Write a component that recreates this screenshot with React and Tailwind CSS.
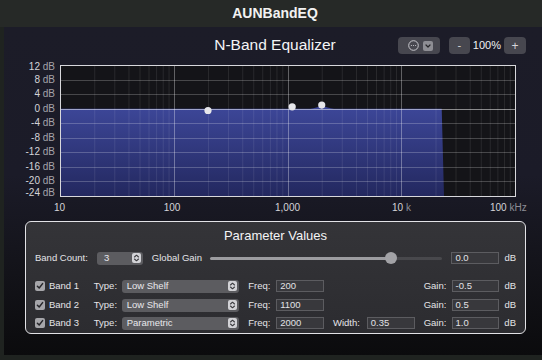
import React from "react";

function Chart() {
  const W = 455;
  const H = 131;
  const xf = (f) => (W / 4) * (Math.log10(f) - 1);
  const yd = (d) => ((12 - d) * H) / 36;
  const minors = [];
  for (let dec = 10; dec < 100000; dec *= 10)
    for (let k = 2; k <= 9; k++) minors.push(xf(dec * k));
  const majors = [100, 1000, 10000].map(xf);
  const hs = [8, 4, -4, -8, -12, -16, -20].map(yd);
  const z = yd(0);
  return (
    <svg width="456" height="132" viewBox="0 0 456 132" className="block">
      <defs>
        <linearGradient id="fillg" x1="0" y1="0" x2="0" y2="1">
          <stop offset="0" stopColor="#3d4799" />
          <stop offset="1" stopColor="#23285f" />
        </linearGradient>
      </defs>
      <rect x="0" y="0" width="456" height="132" fill="#141418" />
      <path
        d={`M0.5,${z} H250 C255,${z} 258,41.2 262,41.2 C266,41.2 269,${z} 274,${z} H381.7 L384,131 H0.5 Z`}
        fill="url(#fillg)"
      />
      {minors.map((x, i) => (
        <line key={"m" + i} x1={x + 0.5} x2={x + 0.5} y1="0" y2="131" stroke="rgba(255,255,255,0.09)" strokeWidth="1" />
      ))}
      {majors.map((x, i) => (
        <line key={"M" + i} x1={Math.round(x) + 0.5} x2={Math.round(x) + 0.5} y1="0" y2="131" stroke="rgba(255,255,255,0.33)" strokeWidth="1" />
      ))}
      {hs.map((y, i) => (
        <line key={"h" + i} x1="0" x2="456" y1={Math.round(y) + 0.5} y2={Math.round(y) + 0.5} stroke="rgba(255,255,255,0.22)" strokeWidth="1" />
      ))}
      <line x1="0" x2="456" y1={Math.round(z) + 0.5} y2={Math.round(z) + 0.5} stroke="rgba(255,255,255,0.5)" strokeWidth="1" />
      <rect x="0.5" y="0.5" width="455" height="131" fill="none" stroke="#d8d8dc" strokeWidth="1" />
      <circle cx={xf(200)} cy={yd(-0.5)} r="3.6" fill="#e6e6ea" />
      <circle cx={xf(1100)} cy={yd(0.5)} r="3.6" fill="#e6e6ea" />
      <circle cx={xf(2000)} cy={yd(1)} r="3.6" fill="#e6e6ea" />
    </svg>
  );
}

function UpDown() {
  return (
    <span className="w-[9px] h-[10px] rounded-[2px] bg-[#d2d2d6] flex items-center justify-center">
      <svg width="7" height="8" viewBox="0 0 7 8">
        <path d="M1.5 3 L3.5 1.2 L5.5 3" fill="none" stroke="#3a3a3e" strokeWidth="1.1" strokeLinecap="round" strokeLinejoin="round" />
        <path d="M1.5 5 L3.5 6.8 L5.5 5" fill="none" stroke="#3a3a3e" strokeWidth="1.1" strokeLinecap="round" strokeLinejoin="round" />
      </svg>
    </span>
  );
}

function Select({ value, w }) {
  return (
    <div className={`${w} h-[13px] rounded-[3px] bg-[#5c5c60] flex items-center justify-between pl-[5px] pr-[2px] text-[#e8e8ec]`}>
      <span className="leading-none">{value}</span>
      <UpDown />
    </div>
  );
}

function Field({ value }) {
  return (
    <div className="w-[48px] h-[12px] bg-[#38383c] border border-[#5c5c60] flex items-center pl-[3px] text-[#e2e2e6] leading-none">
      {value}
    </div>
  );
}

function Check() {
  return (
    <span className="w-[10px] h-[10px] rounded-[2px] bg-[#a6a6aa] flex items-center justify-center">
      <svg width="8" height="8" viewBox="0 0 8 8">
        <path d="M1.4 4.2 L3.2 6 L6.6 1.6" fill="none" stroke="#26262a" strokeWidth="1.5" strokeLinecap="round" strokeLinejoin="round" />
      </svg>
    </span>
  );
}

function BandRow({ n, type, freq, width, gain, mt }) {
  return (
    <div className={`${mt} h-[14px] flex items-center`}>
      <Check />
      <span className="ml-[4px] w-[45px]">Band {n}</span>
      <span className="w-[28px]">Type:</span>
      <Select value={type} w="w-[118px]" />
      <span className="ml-[9px] w-[28px]">Freq:</span>
      <Field value={freq} />
      {width ? (
        <>
          <span className="ml-[9px] w-[34px]">Width:</span>
          <Field value={width} />
        </>
      ) : (
        <span className="ml-[9px] w-[82px]" />
      )}
      <span className="ml-[9px] w-[28px]">Gain:</span>
      <Field value={gain} />
      <span className="ml-[5px]">dB</span>
    </div>
  );
}

export default function App() {
  const yLabels = [
    ["12", 66.5],
    ["8", 79.5],
    ["4", 94],
    ["0", 108.5],
    ["-4", 123],
    ["-8", 137.5],
    ["-12", 152],
    ["-16", 166.5],
    ["-20", 181],
    ["-24", 193],
  ];
  const xLabels = [
    ["10", "", 59.5],
    ["100", "", 172],
    ["1,000", "", 287.5],
    ["10", "k", 401.5],
  ];
  return (
    <div className="w-[542px] h-[360px] bg-[#1f2320] flex flex-col overflow-hidden font-['Liberation_Sans',Arial,sans-serif]">
      <div className="h-[27px] shrink-0 bg-[#262927] flex items-center justify-center pl-[8px] text-[14px] font-bold text-[#f2f2f2]">
        AUNBandEQ
      </div>
      <div className="flex-1 pl-[4px] pb-[5px] flex">
        <div className="flex-1 flex flex-col bg-[linear-gradient(180deg,#1c1c28_0%,#1b1b28_45%,#131319_75%,#0b0b0d_100%)]">
          {/* header */}
          <div className="h-[36px] grid grid-cols-[1fr_auto_1fr] items-center pl-[4px]">
            <div />
            <div className="text-[15.5px] text-[#f4f4f6] leading-none">N-Band Equalizer</div>
            <div className="flex items-center justify-end pr-[16px] pt-[1px]">
              <div className="w-[42px] h-[17px] rounded-[4px] bg-[#47474f] flex items-center pl-[10px] gap-[4px]">
                <svg width="11" height="11" viewBox="0 0 11 11">
                  <circle cx="5.5" cy="5.5" r="4.8" fill="none" stroke="#c8c8ce" strokeWidth="1" />
                  <circle cx="3.4" cy="5.5" r="0.6" fill="#c8c8ce" />
                  <circle cx="5.5" cy="5.5" r="0.6" fill="#c8c8ce" />
                  <circle cx="7.6" cy="5.5" r="0.6" fill="#c8c8ce" />
                </svg>
                <span className="w-[10px] h-[10px] rounded-[2px] bg-[#8e8e94] flex items-center justify-center">
                  <svg width="6" height="4" viewBox="0 0 6 4">
                    <path d="M1 1 L3 3 L5 1" fill="none" stroke="#26262a" strokeWidth="1.2" strokeLinecap="round" strokeLinejoin="round" />
                  </svg>
                </span>
              </div>
              <div className="ml-[9px] w-[21px] h-[17px] rounded-[4px] bg-[#47474f] flex items-center justify-center text-[11px] text-[#d6d6da] leading-none">
                -
              </div>
              <span className="ml-[3px] text-[11px] text-[#f0f0f2] leading-none">100%</span>
              <div className="ml-[3px] w-[22px] h-[17px] rounded-[4px] bg-[#47474f] flex items-center justify-center text-[12px] text-[#d6d6da] leading-none">
                +
              </div>
            </div>
          </div>

          {/* chart */}
          <div className="relative h-[152px] text-[10px] leading-none">
            <div className="absolute left-[56px] top-[2px]">
              <Chart />
            </div>
            {yLabels.map(([v, y]) => (
              <div
                key={v}
                className="absolute left-0 w-[51px] text-right whitespace-nowrap"
                style={{ top: y - 63 - 5 }}
              >
                <span className="text-[#d4d4d8]">{v}</span>
                <span className="text-[#a4a4aa]"> dB</span>
              </div>
            ))}
            {xLabels.map(([v, u, x]) => (
              <div
                key={v + u}
                className="absolute top-[140px] -translate-x-1/2 whitespace-nowrap"
                style={{ left: x - 4 }}
              >
                <span className="text-[#d4d4d8]">{v}</span>
                {u && <span className="text-[#8e8e96]"> {u}</span>}
              </div>
            ))}
            <div className="absolute top-[140px] left-[486px] whitespace-nowrap">
              <span className="text-[#d4d4d8]">100</span>
              <span className="text-[#8e8e96]"> kHz</span>
            </div>
          </div>

          {/* parameter panel */}
          <div className="mt-[6px] ml-[21px] w-[501px] h-[113px] rounded-[6px] border border-[#e2e2e6] bg-[linear-gradient(180deg,#343438_0%,#2c2c30_100%)] px-[9px] pt-[5px] text-[9.5px] text-[#e4e4e8]">
            <div className="h-[16px] flex items-center justify-center text-[13px] text-[#f4f4f6] leading-none">
              Parameter Values
            </div>
            <div className="mt-[8px] h-[14px] flex items-center">
              <span className="w-[62px]">Band Count:</span>
              <div className="w-[46px] h-[13px] rounded-[3px] bg-[#5c5c60] flex items-center justify-between pl-[7px] pr-[2px] text-[#e8e8ec]">
                <span className="leading-none">3</span>
                <UpDown />
              </div>
              <span className="ml-[9px] w-[58px]">Global Gain</span>
              <div className="relative w-[233px] h-[14px] flex items-center">
                <div className="h-[3px] w-[181px] rounded-l-full bg-[#9c9ca0]" />
                <div className="h-[3px] flex-1 rounded-r-full bg-[#48484c]" />
                <div className="absolute left-[175px] top-[1px] w-[12px] h-[12px] rounded-full bg-[#a2a2a6]" />
              </div>
              <div className="ml-[9px]">
                <Field value="0.0" />
              </div>
              <span className="ml-[5px]">dB</span>
            </div>
            <BandRow n="1" type="Low Shelf" freq="200" gain="-0.5" mt="mt-[14px]" />
            <BandRow n="2" type="Low Shelf" freq="1100" gain="0.5" mt="mt-[5px]" />
            <BandRow n="3" type="Parametric" freq="2000" width="0.35" gain="1.0" mt="mt-[4px]" />
          </div>
        </div>
      </div>
    </div>
  );
}
